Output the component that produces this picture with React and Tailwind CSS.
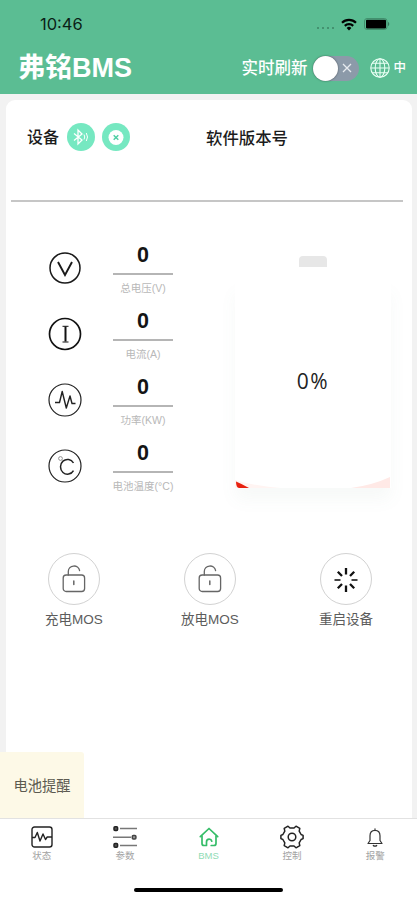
import { clsx } from 'clsx';

const StatusBar = () => (
  <div className="flex h-12 items-center justify-between pl-[40px] pr-[27px] text-[#0b1f17]">
    <span className="font-['Inter',sans-serif] text-[16.5px] font-normal leading-none">10:46</span>
    <div className="flex items-center text-black">
      <div className="mr-[7px] mt-[8px] flex gap-[2.5px]">
        {[0, 1, 2, 3].map((i) => (
          <span key={i} className="h-[2.5px] w-[2.5px] rounded-full bg-[#3c8465]" />
        ))}
      </div>
      <svg width="16" height="13" viewBox="0 0 16 13" className="mr-[7px]" fill="none" stroke="currentColor" strokeWidth="2.2">
        <path d="M1 4.8a10 10 0 0 1 14 0" />
        <path d="M3.800 7.900a6 6 0 0 1 8.400 0" />
        <path d="M8 12.400 5.600 10a3.400 3.400 0 0 1 4.800 0Z" fill="currentColor" stroke="none" />
      </svg>
      <svg width="26" height="12" viewBox="0 0 26 12">
        <rect x="0.5" y="0.5" width="22.5" height="11" rx="2.5" fill="none" stroke="#3c8465" strokeWidth="0.8" />
        <rect x="2" y="1.800" width="20" height="8.600" rx="0.8" fill="#000" />
        <path d="M24.200 4v4c1.300-.4 1.300-3.600 0-4Z" fill="#2c6b50" />
      </svg>
    </div>
  </div>
);

const Header = () => (
  <header className="h-[94px] shrink-0 bg-[#5bbd93]">
    <StatusBar />
    <div className="flex h-10 items-center pl-[18px] pr-[11px] text-white">
      <h1 className="text-[27px] font-bold leading-none">弗铭BMS</h1>
      <span className="ml-auto text-[16.500px] font-medium leading-none">实时刷新</span>
      <div className="ml-[6px] flex h-[25px] w-[46px] items-center justify-between rounded-full bg-[#8c9aa9] pr-[7px]">
        <span className="h-[25px] w-[25px] rounded-full bg-white shadow-[0_0_2px_rgba(0,0,0,0.5)]" />
        <svg width="10" height="10" viewBox="0 0 10 10" stroke="#e6ebef" strokeWidth="1.300">
          <path d="M1 1l8 8M9 1 1 9" />
        </svg>
      </div>
      <svg width="20" height="20" viewBox="0 0 20 20" fill="none" stroke="#e8fff4" strokeWidth="1.100" className="ml-[11px]">
        <circle cx="10" cy="10" r="9.200" />
        <ellipse cx="10" cy="10" rx="4.800" ry="9.200" />
        <path d="M10 .8v18.400M.8 10h18.400M2.400 5.200h15.200M2.400 14.800h15.200" />
      </svg>
      <span className="ml-[3px] text-[12.500px] font-medium leading-none">中</span>
    </div>
  </header>
);

const VoltIcon = () => (
  <svg width="34" height="34" viewBox="0 0 34 34" fill="none" stroke="#1a1a1a">
    <circle cx="17" cy="17" r="15" strokeWidth="1.500" />
    <path d="M10 11 17 24l7-13" strokeWidth="1.900" />
  </svg>
);

const CurrentIcon = () => (
  <svg width="34" height="34" viewBox="0 0 34 34" fill="none" stroke="#111">
    <circle cx="17" cy="17" r="15.500" strokeWidth="1.700" />
    <path d="M17.500 9.500v15" strokeWidth="2" />
    <path d="M14.500 9.300h6M14.500 25h6" strokeWidth="1" />
  </svg>
);

const PowerIcon = () => (
  <svg width="34" height="34" viewBox="0 0 34 34" fill="none" stroke="#222" strokeLinejoin="round">
    <circle cx="17" cy="17" r="16" strokeWidth="1.200" />
    <path d="M7 19.500h4.500l2.700-11L18.300 25l3.700-12 2 7.500h3.500" strokeWidth="1.400" />
  </svg>
);

const TempIcon = () => (
  <svg width="34" height="34" viewBox="0 0 34 34" fill="none" stroke="#222">
    <circle cx="17" cy="17" r="16" strokeWidth="1.200" />
    <circle cx="12.500" cy="9.500" r="1.900" stroke="#888" strokeWidth="0.900" />
    <path d="M25.500 14a7 7.400 0 1 0 0 7.600" strokeWidth="1.500" />
  </svg>
);

const metrics = [
  { label: '总电压(V)', value: 0, Icon: VoltIcon },
  { label: '电流(A)', value: 0, Icon: CurrentIcon },
  { label: '功率(KW)', value: 0, Icon: PowerIcon },
  { label: '电池温度(°C)', value: 0, Icon: TempIcon },
];

const Metric = ({ label, value, Icon }) => (
  <div className="flex h-[66px] items-start">
    <div className="mt-[10px]">
      <Icon />
    </div>
    <div className="ml-[31px] flex w-[60px] flex-col items-center">
      <span className="flex h-[32px] items-center pb-[3px] text-[21.500px] font-bold leading-none text-[#151515]">
        {value}
      </span>
      <span className="h-[1.500px] w-full bg-[#b5b5b5]" />
      <span className="mt-[7px] whitespace-nowrap text-[10.500px] leading-[13px] text-[#b8b8b8]">{label}</span>
    </div>
  </div>
);

const Battery = ({ percent }) => (
  <div className="flex w-[156px] flex-col items-center pt-[15px]">
    <div className="h-[11px] w-[28px] rounded-t-[4px] bg-[#e7e7e7]" />
    <div className="mt-[14px] flex h-[207px] w-full flex-col bg-white shadow-[0_12px_16px_rgba(100,140,125,0.050)]">
      <span className="pt-[87px] text-center font-['Open_Sans',sans-serif] text-[21px] leading-[26px] tracking-[1.500px] text-[#222]">
        {percent}%
      </span>
      <svg width="156" height="12" viewBox="0 0 156 12" className="mt-auto">
        <path d="M0 4Q20 10 46 12H0Z" fill="#fff4f2" />
        <path d="M1 5.500Q7 8 14 12H4Q1 11.500 1 5.500Z" fill="#e8210f" />
        <path d="M155 1Q138 9 116 12H155Z" fill="#ffe9e6" />
      </svg>
    </div>
  </div>
);

const UnlockIcon = () => (
  <svg width="24" height="28" viewBox="0 0 24 28" fill="none" stroke="#666" strokeWidth="1.300" strokeLinecap="round">
    <rect x="1.200" y="10" width="21.400" height="16.500" rx="3" />
    <path d="M6.300 10V6.500a5.700 5.500 0 0 1 11.300-1" />
    <path d="M11.800 16v3.500" strokeWidth="1.500" />
  </svg>
);

const RestartIcon = () => (
  <svg width="24" height="24" viewBox="0 0 24 24" fill="none" stroke="#111" strokeWidth="2.300" className="mt-[2px]">
    <path d="M12 0v6.500M12 17.500V24M3.800 3.800 8 8M16 16l4.200 4.200M3.800 20.200 8 16M16 8l4.200-4.200" />
    <path d="M.5 12h6M17.500 12h6" stroke="#444" strokeWidth="1.900" />
  </svg>
);

const actions = [
  { label: '充电MOS', Icon: UnlockIcon },
  { label: '放电MOS', Icon: UnlockIcon },
  { label: '重启设备', Icon: RestartIcon },
];

const ActionButton = ({ label, Icon }) => (
  <button className="flex w-[60px] flex-col items-center">
    <span className="flex h-[52px] w-[52px] items-center justify-center rounded-full border border-[#d2d2d2]">
      <Icon />
    </span>
    <span className="mt-[6px] whitespace-nowrap text-[13.500px] leading-[18px] text-[#5c5c5c]">{label}</span>
  </button>
);

const tabs = [
  {
    label: '状态',
    icon: (
      <svg width="22" height="22" viewBox="0 0 22 22" fill="none" stroke="#222" strokeWidth="1.400" strokeLinejoin="round">
        <rect x="1" y="1" width="20" height="20" rx="2.500" />
        <path d="M1 11.500h3l2.300-5 2.700 8.500 3-7 2.500 5.500 1.700-2.500H21" />
      </svg>
    ),
  },
  {
    label: '参数',
    icon: (
      <svg width="24" height="22" viewBox="0 0 24 22" fill="none" stroke="#777" strokeWidth="1.500">
        <path d="M7 2.500h17M0 11.300h18M7 19.500h17" />
        <rect x="1" y="0.800" width="3.600" height="3.600" rx="1" stroke="#222" fill="#555" />
        <rect x="19.300" y="9.500" width="3.600" height="3.600" rx="1" stroke="#444" fill="#999" />
        <rect x="1" y="17.600" width="3.600" height="3.600" rx="1" stroke="#222" fill="#555" />
      </svg>
    ),
  },
  {
    label: 'BMS',
    active: true,
    icon: (
      <svg width="20" height="20" viewBox="0 0 20 20" fill="none" stroke="#35bd68" strokeWidth="1.700" strokeLinecap="round" strokeLinejoin="round">
        <path d="M1.300 9.700 10 1.500l8.700 8.200" />
        <path d="M3 9v7.500c0 1.200.8 2 2 2h2.500V15c0-1.700 1.200-2.800 2.700-2.800s2.300.8 2.600 2" />
        <path d="M17 9v7.500c0 1.200-.8 2-2 2h-2.800" />
      </svg>
    ),
  },
  {
    label: '控制',
    icon: (
      <svg width="24" height="24" viewBox="0 0 24 24" fill="none" stroke="#222" strokeWidth="1.500" strokeLinejoin="round">
        <path d="M8 1.200 10 3h4l2-1.800 3.800 2.200-.6 2.800 1.900 3.300 2 .9v3.200l-2 .9-1.900 3.300.6 2.800L16 22.800 14 21h-4l-2 1.800-3.800-2.200.6-2.800-1.900-3.300-2-.9v-3.200l2-.9 1.900-3.300-.6-2.800Z" />
        <circle cx="12" cy="12" r="3.800" />
      </svg>
    ),
  },
  {
    label: '报警',
    icon: (
      <svg width="16" height="19" viewBox="0 0 16 19" fill="none" stroke="#333" strokeWidth="1.200" strokeLinejoin="round" strokeLinecap="round">
        <path d="M8 .8v1.500M8 2.300c-3.300 0-5 2.400-5 5.500v4.700L1 15.500h14l-2-3V7.800c0-3.100-1.700-5.500-5-5.500Z" />
        <path d="M6.300 17.500c.8.900 2.600.9 3.400 0" />
      </svg>
    ),
  },
];

const TabBar = () => (
  <nav className="h-[82px] shrink-0 border-t border-[#e2e2e2] bg-white">
    <div className="flex pt-[5px]">
      {tabs.map(({ label, icon, active }) => (
        <button key={label} className="flex flex-1 flex-col items-center">
          <span className="flex h-[26px] items-center">{icon}</span>
          <span className={clsx('text-[9.500px] leading-[12px]', active ? 'text-[#8fdcb5]' : 'text-[#a3a3a3]')}>{label}</span>
        </button>
      ))}
    </div>
    <div className="mx-auto mt-[26px] h-[4px] w-[149px] rounded-full bg-black" />
  </nav>
);

export default function App() {
  return (
    <div className="relative flex h-[900px] w-full flex-col overflow-hidden bg-[#f2f2f2] font-['Liberation_Sans','Noto_Sans_CJK_SC',sans-serif]">
      <Header />

      <main className="ml-[6px] mr-[5px] mt-[6px] flex-1 rounded-t-[9px] bg-white">
        <section className="ml-[5px] mr-[9px] flex h-[102px] items-start border-b-2 border-[#c6c6c6] pl-[16px] pt-[23px]">
          <div className="flex h-[28px] w-[179px] items-center">
            <span className="pt-[2px] text-[16px] font-medium leading-none text-[#1c1c1c]">设备</span>
            <span className="ml-[8px] flex h-[28px] w-[28px] items-center justify-center rounded-full bg-[#76e8c1]">
              <svg width="16" height="18" viewBox="0 0 16 18" fill="none" stroke="#fff" strokeWidth="1.300">
                <path d="M1 5.500 9 12l-4 4V2l4 4-8 6.500" />
                <path d="M11 6.500q1.500 2.500 0 5M13.300 5q2.400 4 0 8" strokeWidth="1" />
              </svg>
            </span>
            <span className="ml-[7px] flex h-[28px] w-[28px] items-center justify-center rounded-full bg-[#76e8c1]">
              <svg width="16" height="16" viewBox="0 0 16 16">
                <circle cx="8" cy="8.500" r="7.500" fill="#fff" />
                <path d="m5.700 6.200 4.600 4.600M10.300 6.200l-4.600 4.600" stroke="#4fcfa4" strokeWidth="1.500" />
              </svg>
            </span>
          </div>
          <span className="flex h-[28px] items-center pt-[2px] text-[16.400px] font-medium leading-none text-[#1c1c1c]">软件版本号</span>
        </section>

        <section className="flex justify-between pl-[42px] pr-[21px] pt-[39px]">
          <div>
            {metrics.map((m) => (
              <Metric key={m.label} {...m} />
            ))}
          </div>
          <Battery percent={0} />
        </section>

        <section className="flex justify-between pl-[38px] pr-[36px] pt-[48px]">
          {actions.map((a) => (
            <ActionButton key={a.label} {...a} />
          ))}
        </section>
      </main>

      {/* floating battery reminder */}
      <div className="absolute bottom-[82px] left-0 flex h-[66px] w-[84px] items-center justify-center rounded-tr-[3px] bg-[#fdf9e7] pt-[3px] text-[14.300px] text-[#5c5a50]">
        电池提醒
      </div>

      <TabBar />
    </div>
  );
}
